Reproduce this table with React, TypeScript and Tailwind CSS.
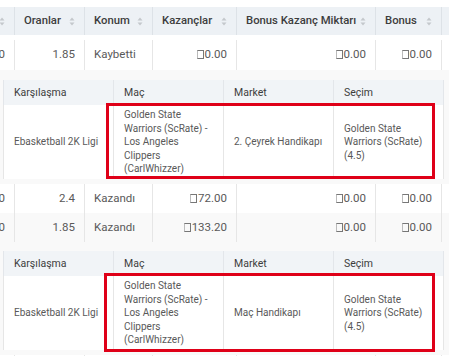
import React from "react";

const Sort = () => (
  <svg width="6" height="9" viewBox="0 0 6 9" className="shrink-0">
    <path d="M3 0.5 L5.5 3.5 L0.5 3.5 Z" fill="#c4c8cc" />
    <path d="M3 8.5 L5.5 5.5 L0.5 5.5 Z" fill="#c4c8cc" />
  </svg>
);

const Tl = () => (
  <span className="inline-block w-[7px] h-[9px] border border-[#777] border-l-[#bbb] mr-[1px] align-[-1px]" />
);

const Money = ({ v }: { v: string }) => (
  <span>
    <Tl />
    {v}
  </span>
);

const W = ["w-[15px]", "w-[70px]", "w-[68px]", "w-[84px]", "w-[139px]", "w-[66px]"];

function Header() {
  const labels = ["", "Oranlar", "Konum", "Kazançlar", "Bonus Kazanç Miktarı", "Bonus"];
  return (
    <div className="flex h-[28px] bg-[#edf1f5] text-[11.3px] font-medium text-[#3d3d3d]">
      {labels.map((l, i) => (
        <div
          key={i}
          className={`${W[i]} shrink-0 border-r border-[#dde2e7] flex items-center ${
            i === 0 ? "justify-end pr-[9px]" : "justify-between pl-[9px] pr-[9px]"
          } whitespace-nowrap`}
        >
          {l && <span>{l}</span>}
          <Sort />
        </div>
      ))}
      <div className="flex-1" />
    </div>
  );
}

function Row({
  cells,
  bg,
  h,
}: {
  cells: React.ReactNode[];
  bg: string;
  h: string;
}) {
  return (
    <div className={`flex ${h} ${bg} text-[11.5px] text-[#595959]`}>
      {cells.map((c, i) => (
        <div
          key={i}
          className={`${W[i]} shrink-0 border-r border-[#e6e6e6] flex items-center ${
            i === 2 ? "justify-start pl-[9px]" : "justify-end pr-[9px]"
          } whitespace-nowrap`}
        >
          {c}
        </div>
      ))}
      <div className="flex-1" />
    </div>
  );
}

const dataCells = (odds: string, pos: string, win: string): React.ReactNode[] => [
  "0",
  odds,
  pos,
  <Money v={win} />,
  <Money v="0.00" />,
  <Money v="0.00" />,
];

function Nested({
  market,
  box,
}: {
  market: string;
  box: string;
}) {
  const head = ["Karşılaşma", "Maç", "Market", "Seçim"];
  const body = [
    "Ebasketball 2K Ligi",
    "Golden State Warriors (ScRate) - Los Angeles Clippers (CarlWhizzer)",
    market,
    "Golden State Warriors (ScRate) (4.5)",
  ];
  return (
    <div className="relative w-[440px] ml-[3px]">
      <div className="flex h-[25px] bg-[#f1f4f7] text-[10.5px] text-[#3d3d3d]">
        {head.map((h, i) => (
          <div
            key={i}
            className="w-[110px] shrink-0 border-l border-[#e3e6ea] flex items-center pl-[10px]"
          >
            {h}
          </div>
        ))}
        <div className="border-l border-[#e3e6ea]" />
      </div>
      <div className="flex bg-white text-[10px] leading-[13.6px] text-[#595959]">
        {body.map((b, i) => (
          <div
            key={i}
            className="w-[110px] shrink-0 border-l border-[#e6e6e6] flex items-center px-[10px] py-[3px]"
          >
            {b}
          </div>
        ))}
        <div className="border-l border-[#e6e6e6]" />
      </div>
      <div className={`absolute border-[3px] border-[#df0018] ${box}`} />
    </div>
  );
}

export default function App() {
  return (
    <div
      className="w-[449px] h-[356px] overflow-hidden bg-white"
      style={{ fontFamily: "Roboto, 'Noto Sans', sans-serif" }}
    >
      <div className="h-[7px] bg-white" />
      <Header />
      <div className="h-[5px] bg-white" />
      <Row cells={dataCells("1.85", "Kaybetti", "0.00")} bg="bg-white" h="h-[30px]" />
      <div className="bg-[#f9f9f9] pt-[10px] pb-[5px]">
        <Nested market="2. Çeyrek Handikapı" box="left-[103px] top-[23px] w-[329px] h-[76px]" />
      </div>
      <Row cells={dataCells("2.4", "Kazandı", "72.00")} bg="bg-white" h="h-[29px]" />
      <Row cells={dataCells("1.85", "Kazandı", "133.20")} bg="bg-[#f9f9f9]" h="h-[29px]" />
      <div className="bg-[#f9f9f9] pt-[9px] pb-[5px]">
        <Nested market="Maç Handikapı" box="left-[101px] top-[22px] w-[331px] h-[79px]" />
      </div>
      <Row cells={["", "", "", "", "", ""]} bg="bg-white" h="h-[29px]" />
    </div>
  );
}
